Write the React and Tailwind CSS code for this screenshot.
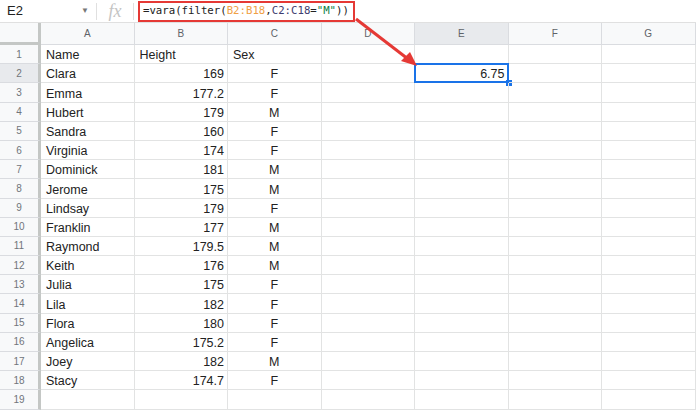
import React from "react";

const data = [
  ["Clara", "169", "F"],
  ["Emma", "177.2", "F"],
  ["Hubert", "179", "M"],
  ["Sandra", "160", "F"],
  ["Virginia", "174", "F"],
  ["Dominick", "181", "M"],
  ["Jerome", "175", "M"],
  ["Lindsay", "179", "F"],
  ["Franklin", "177", "M"],
  ["Raymond", "179.5", "M"],
  ["Keith", "176", "M"],
  ["Julia", "175", "F"],
  ["Lila", "182", "F"],
  ["Flora", "180", "F"],
  ["Angelica", "175.2", "F"],
  ["Joey", "182", "M"],
  ["Stacy", "174.7", "F"],
];

const cols = ["A", "B", "C", "D", "E", "F", "G"];

function RowHead({ n, selected }) {
  return (
    <div
      className={`flex items-center justify-center border-r-[3px] border-b border-r-[#c4c7c5] border-b-[#dadce0] text-[10px] text-[#70757a] ${
        selected ? "bg-[#e8eaed]" : "bg-[#f8f9fa]"
      }`}
    >
      {n}
    </div>
  );
}

function Cell({ children, align = "left" }) {
  const a =
    align === "right"
      ? "justify-end pr-[3px]"
      : align === "center"
      ? "justify-center"
      : "justify-start pl-[5px]";
  return (
    <div
      className={`relative flex items-end border-r border-b border-[#e2e3e3] text-[12.5px] leading-[16px] text-[#222] whitespace-nowrap ${a}`}
    >
      {children}
    </div>
  );
}

export default function App() {
  const rows = [];
  rows.push(
    <React.Fragment key="r1">
      <RowHead n={1} />
      <Cell>Name</Cell>
      <Cell>Height</Cell>
      <Cell>Sex</Cell>
      <Cell />
      <Cell />
      <Cell />
      <Cell />
    </React.Fragment>
  );
  data.forEach((d, i) => {
    const n = i + 2;
    rows.push(
      <React.Fragment key={n}>
        <RowHead n={n} selected={n === 2} />
        <Cell>{d[0]}</Cell>
        <Cell align="right">{d[1]}</Cell>
        <Cell align="center">{d[2]}</Cell>
        <Cell />
        {n === 2 ? (
          <Cell align="right">
            6.75
            <div className="absolute left-[-1px] top-[-1px] right-[-1px] bottom-[-1px] border-2 border-[#1a73e8]" />
            <div className="absolute right-[-4px] bottom-[-4px] w-[6px] h-[6px] bg-[#1a73e8]" />
          </Cell>
        ) : (
          <Cell />
        )}
        <Cell />
        <Cell />
      </React.Fragment>
    );
  });
  rows.push(
    <React.Fragment key={19}>
      <RowHead n={19} />
      <Cell />
      <Cell />
      <Cell />
      <Cell />
      <Cell />
      <Cell />
      <Cell />
    </React.Fragment>
  );

  return (
    <div
      className="relative w-[696px] h-[412px] overflow-hidden bg-white"
      style={{ fontFamily: "Arial, 'Liberation Sans', sans-serif" }}
    >
      {/* formula bar */}
      <div className="flex items-center h-[23px] border-b border-[#e0e0e0]">
        <div className="flex items-center w-[96px] h-full pl-[7px] pr-[7px]">
          <span className="text-[13px] text-[#222]">E2</span>
          <span className="ml-auto text-[8px] text-[#777]">▼</span>
        </div>
        <div className="w-px h-[17px] bg-[#e0e0e0]" />
        <div className="w-[36px] flex justify-center">
          <span
            className="text-[18px] italic text-[#c4c4c4] leading-none"
            style={{ fontFamily: "'Liberation Serif', serif" }}
          >
            fx
          </span>
        </div>
        <div className="w-px h-[17px] bg-[#e0e0e0]" />
        <div
          className="ml-[4px] flex items-center h-[21px] w-[217px] border-2 border-[#e53935] pl-[3px] text-[10.7px] text-[#222] whitespace-nowrap overflow-hidden"
          style={{ fontFamily: "'DejaVu Sans Mono', monospace" }}
        >
          =vara(filter(
          <span className="text-[#f0a045]">B2:B18</span>,
          <span className="text-[#3c3c6e]">C2:C18</span>=
          <span className="text-[#0b8043]">"M"</span>))
        </div>
      </div>

      {/* grid */}
      <div className="grid grid-cols-[41px_repeat(7,93.5px)] grid-rows-[22px_repeat(19,19.2px)]">
        <div className="bg-[#f8f9fa] border-r-[3px] border-b-[3px] border-[#c4c7c5]" />
        {cols.map((c) => (
          <div
            key={c}
            className={`flex items-center justify-center border-r border-b border-[#dadce0] text-[10px] text-[#5f6368] ${
              c === "E" ? "bg-[#e8eaed]" : "bg-[#f8f9fa]"
            }`}
          >
            {c}
          </div>
        ))}
        {rows}
      </div>

      {/* arrow */}
      <svg
        className="absolute left-0 top-0 pointer-events-none"
        width="696"
        height="412"
      >
        <line x1="356" y1="19" x2="408" y2="59" stroke="#e53935" strokeWidth="3" />
        <polygon points="417,66 401,61 410,52" fill="#e53935" />
      </svg>
    </div>
  );
}
